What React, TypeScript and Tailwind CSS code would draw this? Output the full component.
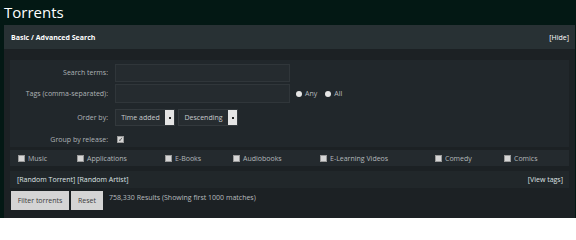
import React from 'react'

const categories = [
  { name: 'Music', w: 'w-[59px]' },
  { name: 'Applications', w: 'w-[88px]' },
  { name: 'E-Books', w: 'w-[68px]' },
  { name: 'Audiobooks', w: 'w-[87px]' },
  { name: 'E-Learning Videos', w: 'w-[115px]' },
  { name: 'Comedy', w: 'w-[69px]' },
  { name: 'Comics', w: 'w-[60px]' },
]

function Label({ children }: { children: React.ReactNode }) {
  return <div className="w-[105px] pr-[7px] text-right text-[#aeb3b6]">{children}</div>
}

function Select({ value }: { value: string }) {
  return (
    <div className="flex h-[17px] w-[60px] items-stretch border border-[#33393d] bg-[#262c30]">
      <div className="flex flex-1 items-center justify-center text-[#c8cbcd]">{value}</div>
      <div className="flex w-[9px] items-center justify-center bg-[#e4e4e4]">
        <div className="h-[2px] w-[2px] bg-[#222]" />
      </div>
    </div>
  )
}

function Box() {
  return <div className="h-[7px] w-[7px] border border-[#9a9a9a] bg-[#d6d6d6]" />
}

export default function App() {
  return (
    <div
      className="h-[218px] w-[576px] overflow-hidden bg-[#031814] text-[7px] leading-none"
      style={{ fontFamily: '"Open Sans", "Liberation Sans", sans-serif' }}
    >
      <h1 className="h-[25px] pl-[4px] pt-[4px] text-[15px] leading-[16px] text-white">Torrents</h1>

      <div className="ml-[4px] h-[193px] w-[571px] bg-[#1c2124]">
        {/* header */}
        <div className="flex h-[24px] items-center justify-between bg-[#283134] pl-[7px] pr-[6px] text-[7px] font-bold text-white">
          <span>Basic / Advanced Search</span>
          <span className="font-normal">[Hide]</span>
        </div>

        <div className="px-[6px] pt-[11px]">
          {/* form box */}
          <div className="flex h-[87px] w-[559px] flex-col bg-[#21272b] pt-[3px]">
            <div className="flex h-[19px] items-center">
              <Label>Search terms:</Label>
              <div className="h-[18px] w-[175px] border border-[#30363a] bg-[#252b2f]" />
            </div>
            <div className="mt-[2px] flex h-[19px] items-center">
              <Label>Tags (comma-separated):</Label>
              <div className="h-[19px] w-[175px] border border-[#30363a] bg-[#252b2f]" />
              <div className="ml-[6px] h-[6px] w-[6px] rounded-full bg-[#e6e6e6]" />
              <span className="ml-[3px] text-[#b8bcbf]">Any</span>
              <div className="ml-[8px] h-[6px] w-[6px] rounded-full bg-[#e6e6e6]" />
              <span className="ml-[3px] text-[#b8bcbf]">All</span>
            </div>
            <div className="mt-[6px] flex h-[17px] items-center">
              <Label>Order by:</Label>
              <Select value="Time added" />
              <div className="w-[3px]" />
              <Select value="Descending" />
            </div>
            <div className="mt-[5px] flex h-[16px] items-center">
              <Label>Group by release:</Label>
              <div className="ml-[2px] flex h-[7px] w-[7px] items-center justify-center border border-[#9a9a9a] bg-[#d6d6d6]">
                <svg viewBox="0 0 7 7" className="h-[7px] w-[7px]">
                  <path d="M1.5 5 L3 3.5 M2.5 5.5 L5.5 1" stroke="#333" strokeWidth="1" fill="none" />
                </svg>
              </div>
            </div>
          </div>

          {/* categories */}
          <div className="mt-[3px] flex h-[16px] w-[559px] items-center bg-[#242a2e] pl-[8px] text-[#b3b8bb]">
            {categories.map((c) => (
              <div key={c.name} className={`flex items-center ${c.w}`}>
                <Box />
                <span className="ml-[3px]">{c.name}</span>
              </div>
            ))}
          </div>

          {/* links */}
          <div className="mt-[5px] flex h-[17px] w-[559px] items-center justify-between bg-[#21272a] pl-[7px] pr-[6px] text-[#dfe2e4]">
            <span>[Random Torrent] [Random Artist]</span>
            <span>[View tags]</span>
          </div>
        </div>

        {/* buttons */}
        <div className="mt-[3px] flex items-start pl-[7px]">
          <button className="h-[19px] w-[58px] bg-[#d4d4d4] text-[7px] text-[#3a3a3a]">Filter torrents</button>
          <button className="ml-[2px] h-[19px] w-[32px] bg-[#d4d4d4] text-[7px] text-[#3a3a3a]">Reset</button>
          <span className="ml-[6px] mt-[3px] text-[#b8bcbf]">758,330 Results (Showing first 1000 matches)</span>
        </div>
      </div>
    </div>
  )
}
